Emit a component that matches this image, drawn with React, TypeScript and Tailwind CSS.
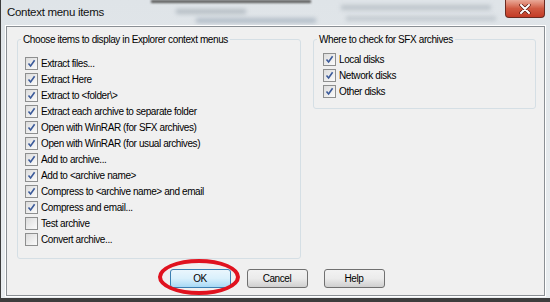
import React from 'react';

const leftItems = [
  { label: 'Extract files...', checked: true },
  { label: 'Extract Here', checked: true },
  { label: 'Extract to <folder\\>', checked: true },
  { label: 'Extract each archive to separate folder', checked: true },
  { label: 'Open with WinRAR (for SFX archives)', checked: true },
  { label: 'Open with WinRAR (for usual archives)', checked: true },
  { label: 'Add to archive...', checked: true },
  { label: 'Add to <archive name>', checked: true },
  { label: 'Compress to <archive name> and email', checked: true },
  { label: 'Compress and email...', checked: true },
  { label: 'Test archive', checked: false },
  { label: 'Convert archive...', checked: false },
];

const rightItems = ['Local disks', 'Network disks', 'Other disks'];

function CheckBox({ checked }: { checked: boolean }) {
  return (
    <span className="flex h-[13px] w-[13px] shrink-0 items-center justify-center border border-[#8e8f8f] bg-gradient-to-br from-[#dcdcdc] to-[#fbfbfb]">
      {checked && (
        <svg width="9" height="9" viewBox="0 0 9 9">
          <path d="M1.5 4.5 L3.6 7 L7.6 1.3" fill="none" stroke="#3b5a9a" strokeWidth="1.6" />
        </svg>
      )}
    </span>
  );
}

function Row({ label, checked }: { label: string; checked: boolean }) {
  return (
    <div className="flex h-[16px] items-center gap-[3px]">
      <CheckBox checked={checked} />
      <span>{label}</span>
    </div>
  );
}

function WinButton({ label, primary }: { label: string; primary?: boolean }) {
  return (
    <button
      className={
        primary
          ? 'h-[19px] w-[61px] rounded-[3px] border border-[#3c7fb1] bg-gradient-to-b from-[#eaf6fd] via-[#d9f0fc] to-[#a7d9f5] text-black'
          : 'h-[19px] w-[61px] rounded-[3px] border border-[#707070] bg-gradient-to-b from-[#f2f2f2] via-[#ebebeb] to-[#cfcfcf] text-black'
      }
    >
      {label}
    </button>
  );
}

export default function App() {
  return (
    <div className="relative flex h-[302px] w-[550px] flex-col overflow-hidden border-b-[4px] border-l border-[#3d3d3d] bg-gradient-to-b from-[#dfe4e8] to-[#e9edf0] pl-[5px] pr-[5px] font-['Liberation_Sans',Arial,sans-serif] text-[10px] tracking-[-0.4px] text-black">
      {/* blurred window behind the glass */}
      <div className="pointer-events-none absolute left-[150px] top-0 h-[3px] w-[160px] bg-[#5a5a5a] blur-[1px]" />
      <div className="pointer-events-none absolute left-[175px] top-[9px] h-[5px] w-[70px] bg-[#9aa4ad] opacity-60 blur-[2px]" />
      <div className="pointer-events-none absolute left-[195px] top-[18px] h-[5px] w-[120px] bg-[#8797a8] opacity-50 blur-[2px]" />
      <div className="pointer-events-none absolute left-[340px] top-[5px] h-[5px] w-[150px] bg-[#9aa4ad] opacity-50 blur-[2px]" />
      <div className="pointer-events-none absolute left-[345px] top-[16px] h-[5px] w-[150px] bg-[#9aa4ad] opacity-40 blur-[2px]" />

      <div className="relative flex h-[26px] shrink-0 items-center justify-between">
        <span className="pl-[1px] text-[11.5px] tracking-[-0.3px] text-[#111]">Context menu items</span>
        <div className="mb-[8px] flex h-[18px] w-[40px] items-center justify-center self-start rounded-b-[4px] border border-t-0 border-[#6b2a20] bg-gradient-to-b from-[#e9a998] via-[#d05a42] to-[#c33a25]">
          <svg width="12" height="10" viewBox="0 0 12 10">
            <path d="M2 1 L10 9 M10 1 L2 9" stroke="#5a1a10" strokeWidth="3.4" strokeLinecap="round" />
            <path d="M2 1 L10 9 M10 1 L2 9" stroke="#ffffff" strokeWidth="2" strokeLinecap="round" />
          </svg>
        </div>
      </div>

      <div className="relative flex flex-1 flex-col border border-[#8a8f94] bg-[#f0f0f0] shadow-[0_0_0_1px_#ffffff]">
        <div className="flex items-start pl-[10px] pt-[5px]">
          <fieldset className="h-[227px] w-[284px] rounded-[3px] border border-[#d5dfe5] pl-[7px] pt-[8px]">
            <legend className="-ml-[4px] px-[2px]">Choose items to display in Explorer context menus</legend>
            {leftItems.map((it) => (
              <Row key={it.label} label={it.label} checked={it.checked} />
            ))}
          </fieldset>
          <fieldset className="ml-[12px] h-[77px] w-[223px] rounded-[3px] border border-[#d5dfe5] pl-[9px] pt-[4px]">
            <legend className="-ml-[6px] px-[2px]">Where to check for SFX archives</legend>
            {rightItems.map((it) => (
              <Row key={it} label={it} checked />
            ))}
          </fieldset>
        </div>

        <div className="mt-auto flex justify-center gap-[16px] pb-[7px] pl-[3px]">
          <WinButton label="OK" primary />
          <WinButton label="Cancel" />
          <WinButton label="Help" />
        </div>

        {/* red highlight drawn over the OK button */}
        <div className="pointer-events-none absolute left-[151px] top-[232px] h-[36px] w-[82px] rounded-[50%] border-[4px] border-[#e0121f]" />
      </div>
      <div className="h-[2px] shrink-0" />
    </div>
  );
}
